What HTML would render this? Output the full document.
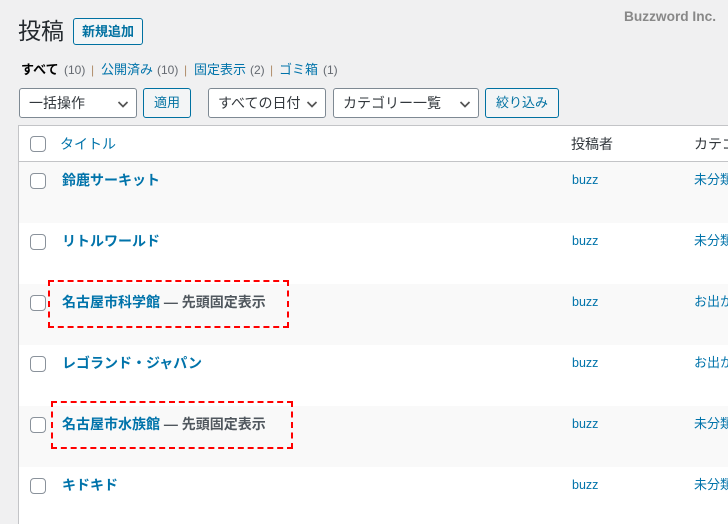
<!DOCTYPE html>
<html lang="ja"><head><meta charset="utf-8"><style>
html,body{margin:0;padding:0}
body{width:728px;height:524px;position:relative;overflow:hidden;background:#f0f0f1;font-family:"Liberation Sans","Noto Sans CJK JP",sans-serif;color:#3c434a;font-size:13px}
.a{position:absolute;white-space:nowrap}
.l{color:#0073aa}
.btn{position:absolute;box-sizing:border-box;border:1px solid #0071a1;border-radius:3px;background:#f3f5f6;color:#0071a1;text-align:center;font-size:13px;white-space:nowrap}
.sel{position:absolute;box-sizing:border-box;border:1px solid #7e8993;border-radius:3px;background:#fff;color:#32373c;font-size:14px;line-height:28px;height:30px;top:88px;padding-left:9px;white-space:nowrap}
.sel svg{position:absolute;top:10px}
.row{position:absolute;left:19px;width:709px;height:61px}
.cb{position:absolute;left:30px;width:16px;height:16px;box-sizing:border-box;border:1.5px solid #8a929b;border-radius:4px;background:#fff}
.t{position:absolute;left:62px;font-size:14px;font-weight:700;color:#0073aa;line-height:20px;white-space:nowrap}
.t span{color:#50575e;font-weight:700;font-size:14px}
.au{position:absolute;left:572px;font-size:12.5px;color:#0073aa;line-height:18px}
.ca{position:absolute;left:694px;font-size:13px;color:#0073aa;line-height:18px;white-space:nowrap}
.dash{position:absolute;box-sizing:border-box;border:2px dashed #f00}
.s{position:absolute;top:61px;font-size:13px;line-height:18px;color:#646970;white-space:nowrap}
.n{font-size:12px}
.p{color:#b08d6a;font-size:12px}
</style></head><body>
<div class="a" style="left:18px;top:14px;font-size:23px;line-height:34px;color:#23282d">投稿</div>
<div class="btn" style="left:73px;top:18px;width:70px;height:27px;line-height:26px;font-weight:700;font-size:13px">新規追加</div>
<div class="a" style="left:624px;top:8px;font-size:13.7px;font-weight:700;color:#888;line-height:18px">Buzzword Inc.</div>

<div class="s" style="left:21px;color:#000;font-weight:700">すべて</div>
<div class="s n" style="left:64px">(10)</div>
<div class="s p" style="left:91px">|</div>
<div class="s" style="left:101px;color:#0073aa">公開済み</div>
<div class="s n" style="left:157px">(10)</div>
<div class="s p" style="left:184px">|</div>
<div class="s" style="left:194px;color:#0073aa">固定表示</div>
<div class="s n" style="left:250px">(2)</div>
<div class="s p" style="left:270px">|</div>
<div class="s" style="left:279px;color:#0073aa">ゴミ箱</div>
<div class="s n" style="left:323px">(1)</div>

<div class="sel" style="left:19px;width:118px">一括操作<svg style="left:96px" width="14" height="10" viewBox="0 0 14 10"><path d="M2.5 3 L7 7.5 L11.5 3" fill="none" stroke="#555" stroke-width="1.7"/></svg></div>
<div class="btn" style="left:143px;top:88px;width:48px;height:30px;line-height:28px">適用</div>
<div class="sel" style="left:208px;width:118px">すべての日付<svg style="left:96px" width="14" height="10" viewBox="0 0 14 10"><path d="M2.5 3 L7 7.5 L11.5 3" fill="none" stroke="#555" stroke-width="1.7"/></svg></div>
<div class="sel" style="left:333px;width:146px">カテゴリー一覧<svg style="left:124px" width="14" height="10" viewBox="0 0 14 10"><path d="M2.5 3 L7 7.5 L11.5 3" fill="none" stroke="#555" stroke-width="1.7"/></svg></div>
<div class="btn" style="left:485px;top:88px;width:74px;height:30px;line-height:28px">絞り込み</div>

<div class="a" style="left:18px;top:125px;width:710px;height:399px;box-sizing:border-box;border-left:1px solid #c3c4c7;border-top:1px solid #c3c4c7;background:#fff"></div>
<div class="a" style="left:19px;top:161px;width:709px;height:1px;background:#c3c4c7"></div>
<div class="row" style="top:162px;background:#f9f9f9"></div>
<div class="row" style="top:284px;background:#f9f9f9"></div>
<div class="row" style="top:406px;background:#f9f9f9"></div>

<div class="cb" style="top:136px"></div>
<div class="a l" style="left:60px;top:134px;font-size:14px;line-height:20px">タイトル</div>
<div class="a" style="left:571px;top:134px;font-size:14px;line-height:20px;color:#32373c">投稿者</div>
<div class="a" style="left:694px;top:134px;font-size:14px;line-height:20px;color:#32373c">カテゴリー</div>

<div class="cb" style="top:173px"></div><div class="t" style="top:170px">鈴鹿サーキット</div><div class="au" style="top:171px">buzz</div><div class="ca" style="top:171px">未分類</div>
<div class="cb" style="top:234px"></div><div class="t" style="top:231px">リトルワールド</div><div class="au" style="top:232px">buzz</div><div class="ca" style="top:232px">未分類</div>
<div class="cb" style="top:295px"></div><div class="t" style="top:292px">名古屋市科学館<span> — 先頭固定表示</span></div><div class="au" style="top:293px">buzz</div><div class="ca" style="top:293px">お出かけ</div>
<div class="cb" style="top:356px"></div><div class="t" style="top:353px">レゴランド・ジャパン</div><div class="au" style="top:354px">buzz</div><div class="ca" style="top:354px">お出かけ</div>
<div class="cb" style="top:417px"></div><div class="t" style="top:414px">名古屋市水族館<span> — 先頭固定表示</span></div><div class="au" style="top:415px">buzz</div><div class="ca" style="top:415px">未分類</div>
<div class="cb" style="top:478px"></div><div class="t" style="top:475px">キドキド</div><div class="au" style="top:476px">buzz</div><div class="ca" style="top:476px">未分類</div>

<div class="dash" style="left:48px;top:280px;width:241px;height:48px"></div>
<div class="dash" style="left:51px;top:401px;width:242px;height:48px"></div>
</body></html>
